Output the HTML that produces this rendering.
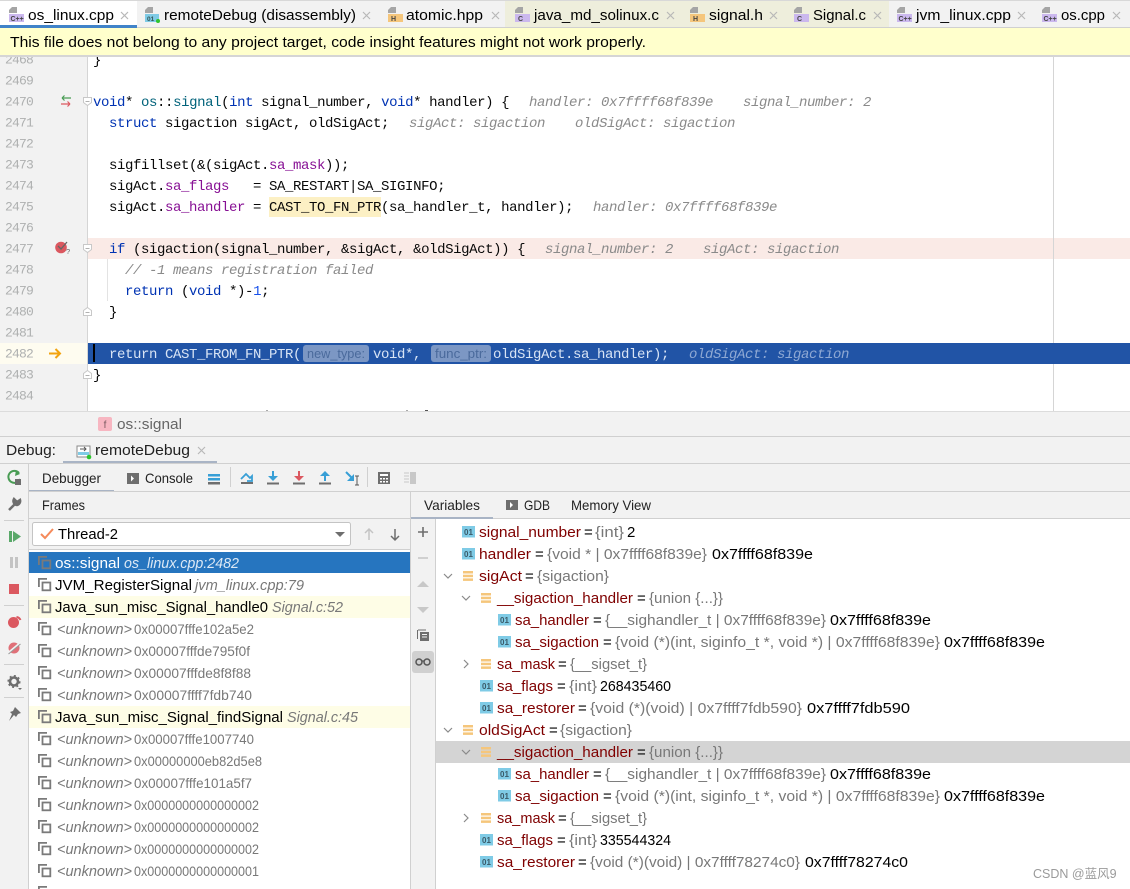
<!DOCTYPE html>
<html><head><meta charset="utf-8"><style>
html,body{margin:0;padding:0;background:#fff;width:1130px;height:889px;overflow:hidden}
svg{display:block}
text{white-space:pre}
.m{font-family:"Liberation Mono",monospace;font-size:14px;letter-spacing:-.4px;fill:#080808}
.n{font-family:"Liberation Mono",monospace;font-size:13px;letter-spacing:-.8px;fill:#aeb0b0}
.h{font-family:"Liberation Mono",monospace;font-size:14px;letter-spacing:-.4px;font-style:italic;fill:#8a8a8a}
.s{font-family:"Liberation Sans",sans-serif;font-size:15px;fill:#000}
.u{font-family:"Liberation Sans",sans-serif;font-size:13.6px;fill:#000}
.i{font-style:italic}
.g{fill:#787878}
.r{fill:#7f0000}
.k{fill:#0033b3}.f{fill:#00627a}.p{fill:#871094}.c{fill:#1750eb}
</style></head><body>
<svg width="1130" height="889" viewBox="0 0 1130 889" xmlns="http://www.w3.org/2000/svg">
<defs>
<g id="fr" fill="none" stroke="#7a7a7a" stroke-width="1.8"><path d="M.9 9V.9H9"/><rect x="4.500" y="4.500" width="7.800" height="7.800"/></g>
<g id="v"><rect width="13" height="11.500" fill="#7fcbe6"/><text x="6.500" y="8.800" text-anchor="middle" font-family="Liberation Sans" font-size="8" font-weight="bold" fill="#3a5a68">01</text></g>
<g id="st" fill="#f5c67c"><rect width="10" height="2.500"/><rect y="3.700" width="10" height="2.500"/><rect y="7.400" width="10" height="2.500"/></g>
<path id="dn" d="M1 1l4 4 4-4" fill="none" stroke="#8a8a8a" stroke-width="1.200"/>
<path id="rt" d="M1 1l4 4-4 4" fill="none" stroke="#8a8a8a" stroke-width="1.200"/>
<g id="filec"><path d="M3 0h5v6H0V3z" fill="#a5a5a5"/><rect x="0" y="7" width="15" height="8" fill="#cbb8ee"/><text x="1.500" y="14" font-family="Liberation Sans" font-size="7" font-weight="bold" fill="#444">C++</text></g>
<g id="filecc"><path d="M3 0h5v6H0V3z" fill="#a5a5a5"/><rect x="0" y="7" width="15" height="8" fill="#cbb8ee"/><text x="3" y="14" font-family="Liberation Sans" font-size="7" font-weight="bold" fill="#444">C</text></g>
<g id="fileh"><path d="M3 0h5v6H0V3z" fill="#a5a5a5"/><rect x="0" y="7" width="15" height="8" fill="#f5c67c"/><text x="3" y="14" font-family="Liberation Sans" font-size="7" font-weight="bold" fill="#444">H</text></g>
<path id="x" d="M0 0l7 7M7 0l-7 7" stroke="#b8b8b8" stroke-width="1.200" fill="none"/>
</defs>

<!-- editor -->
<rect x="0" y="56" width="1130" height="356" fill="#fff"/>
<rect x="0" y="56" width="87" height="356" fill="#f2f2f2"/>
<rect x="88" y="238" width="1042" height="21" fill="#faeae6"/>
<rect x="0" y="343" width="87" height="21" fill="#fefcf0"/>
<rect x="88" y="343" width="1042" height="21" fill="#2154a6"/>
<rect x="87" y="56" width="1" height="356" fill="#d5d5d5"/>
<rect x="1053" y="56" width="1" height="356" fill="#d5d5d5"/>
<rect x="1053" y="343" width="1" height="21" fill="#2154a6"/>
<rect x="107" y="259" width="1" height="42" fill="#e3e3e3"/>

<g transform="translate(0,.5)">
<text class="n" x="5" y="63">2468</text><text class="n" x="5" y="84">2469</text><text class="n" x="5" y="105">2470</text><text class="n" x="5" y="126">2471</text><text class="n" x="5" y="147">2472</text><text class="n" x="5" y="168">2473</text><text class="n" x="5" y="189">2474</text><text class="n" x="5" y="210">2475</text><text class="n" x="5" y="231">2476</text><text class="n" x="5" y="252">2477</text><text class="n" x="5" y="273">2478</text><text class="n" x="5" y="294">2479</text><text class="n" x="5" y="315">2480</text><text class="n" x="5" y="336">2481</text><text class="n" x="5" y="357">2482</text><text class="n" x="5" y="378">2483</text><text class="n" x="5" y="399">2484</text>
</g>

<rect x="269" y="197" width="112" height="20" fill="#fcf0c4"/>
<text class="m" x="93" y="64">}</text>
<text class="m" x="93" y="106"><tspan class="k">void</tspan>* <tspan class="f">os</tspan>::<tspan class="f">signal</tspan>(<tspan class="k">int</tspan> signal_number, <tspan class="k">void</tspan>* handler) {</text>
<text class="h" x="529" y="106">handler: 0x7ffff68f839e</text><text class="h" x="743" y="106">signal_number: 2</text>
<text class="m" x="109" y="127"><tspan class="k">struct</tspan> sigaction sigAct, oldSigAct;</text>
<text class="h" x="409" y="127">sigAct: sigaction</text><text class="h" x="575" y="127">oldSigAct: sigaction</text>
<text class="m" x="109" y="169">sigfillset(&amp;(sigAct.<tspan class="p">sa_mask</tspan>));</text>
<text class="m" x="109" y="190">sigAct.<tspan class="p">sa_flags</tspan>   = SA_RESTART|SA_SIGINFO;</text>
<text class="m" x="109" y="211">sigAct.<tspan class="p">sa_handler</tspan> = CAST_TO_FN_PTR(sa_handler_t, handler);</text>
<text class="h" x="593" y="211">handler: 0x7ffff68f839e</text>
<text class="m" x="109" y="253"><tspan class="k">if</tspan> (sigaction(signal_number, &amp;sigAct, &amp;oldSigAct)) {</text>
<text class="h" x="545" y="253">signal_number: 2</text><text class="h" x="703" y="253">sigAct: sigaction</text>
<text class="h" x="125" y="274">// -1 means registration failed</text>
<text class="m" x="125" y="295"><tspan class="k">return</tspan> (<tspan class="k">void</tspan> *)-<tspan class="c">1</tspan>;</text>
<text class="m" x="109" y="316">}</text>
<rect x="93" y="344" width="2" height="18" fill="#000"/>
<text class="m" style="fill:#d8e4f5" x="109" y="358">return CAST_FROM_FN_PTR(</text>
<rect x="303" y="345" width="66" height="17" rx="3" fill="#7c97c4"/>
<text class="u" style="fill:#4a6a9c;font-size:13px" x="307" y="358" textLength="58" lengthAdjust="spacingAndGlyphs">new_type:</text>
<text class="m" style="fill:#d8e4f5" x="373" y="358">void*,</text>
<rect x="431" y="345" width="60" height="17" rx="3" fill="#7c97c4"/>
<text class="u" style="fill:#4a6a9c;font-size:13px" x="435" y="358" textLength="52" lengthAdjust="spacingAndGlyphs">func_ptr:</text>
<text class="m" style="fill:#d8e4f5" x="493" y="358">oldSigAct.sa_handler);</text>
<text class="h" style="fill:#8fa9d4" x="689" y="358">oldSigAct: sigaction</text>
<text class="m" x="93" y="379">}</text>

<!-- gutter icons -->
<path d="M62 98h9M62 98l2.500-2.500M62 98l2.500 2.500" stroke="#499c54" stroke-width="1.200" fill="none"/>
<path d="M61 104h9M70 104l-2.500-2.500M70 104l-2.500 2.500" stroke="#db5860" stroke-width="1.200" fill="none"/>
<circle cx="61" cy="247.500" r="5.800" fill="#db5860"/>
<path d="M58 246l3 3 6-7" stroke="#666" stroke-width="1.300" fill="none"/>
<text x="66" y="254" font-family="Liberation Sans" font-size="7.500" fill="#666">?</text>
<path d="M49 353.500h11M55.500 349l4.500 4.500-4.500 4.500" stroke="#f2a30f" stroke-width="2" fill="none"/>
<g fill="#fff" stroke="#c8c8c8"><path d="M83.500 97.500h8v5l-4 3-4-3z"/><path d="M83.500 244.500h8v5l-4 3-4-3z"/><path d="M83.500 315.500h8v-5l-4-3-4 3z"/><path d="M83.500 378.500h8v-5l-4-3-4 3z"/></g>
<path d="M85.500 101.500h4M85.500 248.500h4M85.500 312.500h4M85.500 375.500h4" stroke="#b0b0b0" fill="none"/>
<rect x="266" y="410" width="2" height="1" fill="#aaa"/><rect x="406" y="410" width="2" height="1" fill="#aaa"/><rect x="425" y="410" width="3" height="1" fill="#555"/>

<!-- tabs -->
<rect x="0" y="0" width="1130" height="28" fill="#f2f2f2"/>
<rect x="0" y="0" width="1130" height="1" fill="#d8d8d8"/>
<rect x="505" y="1" width="384" height="26" fill="#eeeedc"/>
<rect x="0" y="1" width="137" height="26" fill="#fff"/>
<rect x="0" y="27" width="1130" height="1" fill="#d0d0d0"/>
<rect x="0" y="25" width="137" height="3" fill="#4083c9"/>
<use href="#filec" x="9" y="7"/>
<text class="s" x="28" y="20" textLength="86" lengthAdjust="spacingAndGlyphs">os_linux.cpp</text><use href="#x" x="121" y="12"/>
<path d="M148 7h5v6h-8v-3z" fill="#a5a5a5"/><rect x="145" y="14" width="14" height="8" fill="#7fcbe6"/><text x="147" y="21" font-family="Liberation Sans" font-size="6.500" font-weight="bold" fill="#355">01</text><circle cx="158" cy="21" r="2" fill="#2fc42f"/>
<text class="s" x="164" y="20" textLength="192" lengthAdjust="spacingAndGlyphs">remoteDebug (disassembly)</text><use href="#x" x="363" y="12"/>
<use href="#fileh" x="388" y="7"/>
<text class="s" x="406" y="20" textLength="77" lengthAdjust="spacingAndGlyphs">atomic.hpp</text><use href="#x" x="492" y="12"/>
<use href="#filecc" x="515" y="7"/>
<text class="s" x="534" y="20" textLength="125" lengthAdjust="spacingAndGlyphs">java_md_solinux.c</text><use href="#x" x="667" y="12"/>
<use href="#fileh" x="690" y="7"/>
<text class="s" x="709" y="20" textLength="54" lengthAdjust="spacingAndGlyphs">signal.h</text><use href="#x" x="770" y="12"/>
<use href="#filecc" x="794" y="7"/>
<text class="s" x="813" y="20" textLength="53" lengthAdjust="spacingAndGlyphs">Signal.c</text><use href="#x" x="874" y="12"/>
<use href="#filec" x="897" y="7"/>
<text class="s" x="916" y="20" textLength="95" lengthAdjust="spacingAndGlyphs">jvm_linux.cpp</text><use href="#x" x="1018" y="12"/>
<use href="#filec" x="1042" y="7"/>
<text class="s" x="1061" y="20" textLength="44" lengthAdjust="spacingAndGlyphs">os.cpp</text><use href="#x" x="1113" y="12"/>

<!-- banner -->
<rect x="0" y="28" width="1130" height="28" fill="#ffffcc"/>
<rect x="0" y="55" width="1130" height="2" fill="#d5d5d5"/>
<text class="s" x="10" y="47" textLength="636" lengthAdjust="spacingAndGlyphs">This file does not belong to any project target, code insight features might not work properly.</text>

<!-- breadcrumb + debug header -->
<rect x="0" y="411" width="1130" height="478" fill="#f2f2f2"/>
<rect x="0" y="411" width="1130" height="1" fill="#dcdcdc"/>
<rect x="98" y="417" width="14" height="14" rx="2" fill="#f7b6c1"/>
<text x="105" y="428" text-anchor="middle" font-family="Liberation Sans" font-size="10" fill="#7a5a60">f</text>
<text class="s" style="fill:#666" x="117" y="429" textLength="65" lengthAdjust="spacingAndGlyphs">os::signal</text>
<rect x="0" y="436" width="1130" height="1" fill="#d0d0d0"/>
<text class="s" style="fill:#222" x="6" y="455" textLength="50" lengthAdjust="spacingAndGlyphs">Debug:</text>
<rect x="77" y="446" width="13" height="11" fill="#fff" stroke="#8a8a8a"/><rect x="78" y="452" width="11" height="3" fill="#7fcbe6"/><path d="M80 449h6M84 447l2 2-2 2" stroke="#555" fill="none"/><circle cx="89" cy="457" r="2.300" fill="#2fc42f"/>
<text class="s" style="fill:#222" x="95" y="455" textLength="95" lengthAdjust="spacingAndGlyphs">remoteDebug</text><use href="#x" x="198" y="447"/>
<rect x="63" y="461" width="154" height="2.500" fill="#a9b4c5"/>
<rect x="0" y="463" width="1130" height="1" fill="#d0d0d0"/>

<!-- left toolbar -->
<rect x="28" y="464" width="1" height="425" fill="#d0d0d0"/>
<path d="M19 473a6 6 0 1 0 1 6" fill="none" stroke="#499c54" stroke-width="2"/><path d="M16 470l4 4-5 2z" fill="#499c54"/><rect x="15" y="479" width="6" height="6" fill="#6e6e6e"/>
<path d="M9 510l6-6M14 499a4 4 0 0 0 3 6 4 4 0 0 0 3-5l-3 2-2-2z" stroke="#6e6e6e" stroke-width="2.500" fill="#6e6e6e"/>
<rect x="4" y="520" width="20" height="1" fill="#d0d0d0"/>
<rect x="9" y="531" width="3" height="11" fill="#59a869"/><path d="M13 531l8 5.500-8 5.500z" fill="#59a869"/>
<rect x="10" y="557" width="3" height="11" fill="#c4c4c4"/><rect x="15" y="557" width="3" height="11" fill="#c4c4c4"/>
<rect x="9" y="584" width="10" height="10" fill="#db5860"/>
<rect x="4" y="605" width="20" height="1" fill="#d0d0d0"/>
<circle cx="13.500" cy="622.500" r="5.500" fill="#db5860"/><path d="M16.500 617a5 5 0 0 1 4 3" stroke="#db5860" stroke-width="2" fill="none"/>
<circle cx="14" cy="648" r="5.500" fill="#e07078"/><path d="M8 653l12-10" stroke="#f2f2f2" stroke-width="2"/><path d="M8.500 654l12-10" stroke="#999" stroke-width="1"/>
<rect x="4" y="664" width="20" height="1" fill="#d0d0d0"/>
<circle cx="14" cy="681.500" r="4" fill="none" stroke="#6e6e6e" stroke-width="2.600"/><circle cx="14" cy="681.500" r="5.800" fill="none" stroke="#6e6e6e" stroke-width="1.500" stroke-dasharray="2 2.500"/><path d="M18 688h4l-2 2z" fill="#6e6e6e"/>
<rect x="4" y="697" width="20" height="1" fill="#d0d0d0"/>
<path d="M15 707l6 6-3 1-2 3-2-2-5 6 3-7-2-2 3-1z" fill="#6e6e6e"/>

<!-- sub tabs -->
<text class="u" style="fill:#222" x="42" y="483" textLength="59" lengthAdjust="spacingAndGlyphs">Debugger</text>
<rect x="29" y="490" width="85" height="2" fill="#a9b4c5"/>
<rect x="127" y="473" width="12" height="11" fill="#6e6e6e"/><path d="M131 475.500l3 3-3 3z" fill="#fff"/>
<text class="u" style="fill:#222" x="145" y="483" textLength="48" lengthAdjust="spacingAndGlyphs">Console</text>
<rect x="208" y="474" width="12" height="2.500" fill="#389fd6"/><rect x="208" y="478" width="12" height="2.500" fill="#389fd6"/><rect x="208" y="482" width="12" height="2.500" fill="#6e6e6e"/>
<rect x="230" y="467" width="1" height="20" fill="#d0d0d0"/>
<path d="M241 479l5-5 4 4 2-2v5h-5" fill="none" stroke="#389fd6" stroke-width="1.800"/><rect x="241" y="482" width="12" height="2" fill="#6e6e6e"/>
<path d="M273 471v7" stroke="#389fd6" stroke-width="2"/><path d="M268 476h10l-5 5z" fill="#389fd6"/><rect x="267" y="482.500" width="12" height="2" fill="#6e6e6e"/>
<path d="M299 471v7" stroke="#db5860" stroke-width="2"/><path d="M294 476h10l-5 5z" fill="#db5860"/><rect x="293" y="482.500" width="12" height="2" fill="#6e6e6e"/>
<path d="M325 481v-7" stroke="#389fd6" stroke-width="2"/><path d="M320 476h10l-5-5z" fill="#389fd6"/><rect x="319" y="482.500" width="12" height="2" fill="#6e6e6e"/>
<path d="M346 472l6 6" stroke="#389fd6" stroke-width="2"/><path d="M354 474v7h-7z" fill="#389fd6"/><path d="M355 476h4M355 485h4M357 476v9" stroke="#555"/>
<rect x="367" y="467" width="1" height="20" fill="#d0d0d0"/>
<rect x="378" y="472" width="12" height="12" fill="#6e6e6e"/><rect x="380" y="474" width="8" height="2" fill="#fff"/><path d="M380 478h2v1.500h-2zM383 478h2v1.500h-2zM386 478h2v1.500h-2zM380 481h2v1.500h-2zM383 481h2v1.500h-2zM386 481h2v1.500h-2z" fill="#fff"/>
<path d="M404 473h5M404 476h5M404 479h5M404 482h5" stroke="#c8c8c8"/><rect x="410" y="472" width="6" height="12" fill="#c8c8c8"/>
<rect x="29" y="491" width="1101" height="1" fill="#d0d0d0"/>

<!-- frames panel -->
<text class="u" style="fill:#222" x="42" y="510" textLength="43" lengthAdjust="spacingAndGlyphs">Frames</text>
<rect x="29" y="518" width="381" height="1" fill="#d0d0d0"/>
<rect x="32.500" y="522.500" width="318" height="23" rx="2" fill="#fff" stroke="#c4c4c4"/>
<path d="M41 534l4 4 8-9" fill="none" stroke="#f58a5a" stroke-width="2"/>
<text class="s" x="58" y="539" textLength="60" lengthAdjust="spacingAndGlyphs">Thread-2</text>
<path d="M335 532h10l-5 5z" fill="#6e6e6e"/>
<path d="M369 540v-11M365 533l4-4 4 4" stroke="#c4c4c4" stroke-width="1.500" fill="none"/>
<path d="M395 529v11M391 536l4 4 4-4" stroke="#6e6e6e" stroke-width="1.500" fill="none"/>
<rect x="29" y="549" width="381" height="340" fill="#fff"/>
<rect x="29" y="549" width="381" height="1" fill="#d0d0d0"/>
<rect x="29" y="552" width="381" height="21" fill="#2675bf"/>
<rect x="29" y="596" width="381" height="22" fill="#fefde6"/>
<rect x="29" y="706" width="381" height="22" fill="#fefde6"/>
<rect x="410" y="492" width="1" height="397" fill="#d0d0d0"/>

<use href="#fr" x="38" y="556"/><use href="#fr" x="38" y="578"/><use href="#fr" x="38" y="600"/><use href="#fr" x="38" y="622"/><use href="#fr" x="38" y="644"/><use href="#fr" x="38" y="666"/><use href="#fr" x="38" y="688"/><use href="#fr" x="38" y="710"/><use href="#fr" x="38" y="732"/><use href="#fr" x="38" y="754"/><use href="#fr" x="38" y="776"/><use href="#fr" x="38" y="798"/><use href="#fr" x="38" y="820"/><use href="#fr" x="38" y="842"/><use href="#fr" x="38" y="864"/><use href="#fr" x="38" y="886"/>

<text class="s" style="fill:#fff" x="55" y="568" textLength="65" lengthAdjust="spacingAndGlyphs">os::signal</text><text class="s i" style="fill:#dbe8f5" x="124" y="568" textLength="115" lengthAdjust="spacingAndGlyphs">os_linux.cpp:2482</text>
<text class="s" x="55" y="590" textLength="137" lengthAdjust="spacingAndGlyphs">JVM_RegisterSignal</text><text class="s i g" x="195" y="590" textLength="109" lengthAdjust="spacingAndGlyphs">jvm_linux.cpp:79</text>
<text class="s" x="55" y="612" textLength="213" lengthAdjust="spacingAndGlyphs">Java_sun_misc_Signal_handle0</text><text class="s i g" x="272" y="612" textLength="71" lengthAdjust="spacingAndGlyphs">Signal.c:52</text>
<text class="s i g" x="57" y="634" textLength="75" lengthAdjust="spacingAndGlyphs">&lt;unknown&gt;</text><text class="u g" x="134" y="634" textLength="120" lengthAdjust="spacingAndGlyphs">0x00007fffe102a5e2</text>
<text class="s i g" x="57" y="656" textLength="75" lengthAdjust="spacingAndGlyphs">&lt;unknown&gt;</text><text class="u g" x="134" y="656" textLength="116" lengthAdjust="spacingAndGlyphs">0x00007fffde795f0f</text>
<text class="s i g" x="57" y="678" textLength="75" lengthAdjust="spacingAndGlyphs">&lt;unknown&gt;</text><text class="u g" x="134" y="678" textLength="117" lengthAdjust="spacingAndGlyphs">0x00007fffde8f8f88</text>
<text class="s i g" x="57" y="700" textLength="75" lengthAdjust="spacingAndGlyphs">&lt;unknown&gt;</text><text class="u g" x="134" y="700" textLength="118" lengthAdjust="spacingAndGlyphs">0x00007ffff7fdb740</text>
<text class="s" x="55" y="722" textLength="228" lengthAdjust="spacingAndGlyphs">Java_sun_misc_Signal_findSignal</text><text class="s i g" x="287" y="722" textLength="71" lengthAdjust="spacingAndGlyphs">Signal.c:45</text>
<text class="s i g" x="57" y="744" textLength="75" lengthAdjust="spacingAndGlyphs">&lt;unknown&gt;</text><text class="u g" x="134" y="744" textLength="120" lengthAdjust="spacingAndGlyphs">0x00007fffe1007740</text>
<text class="s i g" x="57" y="766" textLength="75" lengthAdjust="spacingAndGlyphs">&lt;unknown&gt;</text><text class="u g" x="134" y="766" textLength="128" lengthAdjust="spacingAndGlyphs">0x00000000eb82d5e8</text>
<text class="s i g" x="57" y="788" textLength="75" lengthAdjust="spacingAndGlyphs">&lt;unknown&gt;</text><text class="u g" x="134" y="788" textLength="118" lengthAdjust="spacingAndGlyphs">0x00007fffe101a5f7</text>
<text class="s i g" x="57" y="810" textLength="75" lengthAdjust="spacingAndGlyphs">&lt;unknown&gt;</text><text class="u g" x="134" y="810" textLength="125" lengthAdjust="spacingAndGlyphs">0x0000000000000002</text>
<text class="s i g" x="57" y="832" textLength="75" lengthAdjust="spacingAndGlyphs">&lt;unknown&gt;</text><text class="u g" x="134" y="832" textLength="125" lengthAdjust="spacingAndGlyphs">0x0000000000000002</text>
<text class="s i g" x="57" y="854" textLength="75" lengthAdjust="spacingAndGlyphs">&lt;unknown&gt;</text><text class="u g" x="134" y="854" textLength="125" lengthAdjust="spacingAndGlyphs">0x0000000000000002</text>
<text class="s i g" x="57" y="876" textLength="75" lengthAdjust="spacingAndGlyphs">&lt;unknown&gt;</text><text class="u g" x="134" y="876" textLength="125" lengthAdjust="spacingAndGlyphs">0x0000000000000001</text>

<!-- variables panel -->
<rect x="411" y="492" width="719" height="26" fill="#f2f2f2"/>
<text class="u" style="fill:#222" x="424" y="510" textLength="56" lengthAdjust="spacingAndGlyphs">Variables</text>
<rect x="506" y="500" width="12" height="10" fill="#6e6e6e"/><path d="M510 502l3 3-3 3z" fill="#fff"/>
<text class="u" style="fill:#222" x="524" y="510" textLength="26" lengthAdjust="spacingAndGlyphs">GDB</text>
<text class="u" style="fill:#222" x="571" y="510" textLength="80" lengthAdjust="spacingAndGlyphs">Memory View</text>
<rect x="411" y="518" width="719" height="1" fill="#d0d0d0"/>
<rect x="411" y="517" width="82" height="2" fill="#a9b4c5"/>
<rect x="436" y="519" width="694" height="370" fill="#fff"/>
<rect x="435" y="519" width="1" height="370" fill="#d0d0d0"/>
<path d="M418 532h10M423 527v10" stroke="#6e6e6e" stroke-width="1.600"/>
<path d="M418 558h10" stroke="#c8c8c8" stroke-width="1.600"/>
<path d="M417 587l6-6 6 6z" fill="#c8c8c8"/>
<path d="M417 607l6 6 6-6z" fill="#c8c8c8"/>
<path d="M418 630h8M417.500 630v9" stroke="#6e6e6e" fill="none"/><rect x="420" y="632" width="9" height="9" fill="#6e6e6e"/><path d="M422 634.500h5M422 637h5" stroke="#f2f2f2"/>
<rect x="412" y="651" width="22" height="22" rx="3" fill="#d0d0d0"/>
<circle cx="419" cy="662" r="3" fill="none" stroke="#555" stroke-width="1.500"/><circle cx="427" cy="662" r="3" fill="none" stroke="#555" stroke-width="1.500"/><path d="M422 661h2" stroke="#555" stroke-width="1.200"/>

<rect x="436" y="741" width="694" height="22" fill="#d4d4d4"/>

<use href="#v" x="462" y="526"/>
<text class="s r" x="479" y="537" textLength="102" lengthAdjust="spacingAndGlyphs">signal_number</text><text class="s" x="584" y="537">=</text><text class="s g" x="595" y="537" textLength="29" lengthAdjust="spacingAndGlyphs">{int}</text><text class="s" x="627" y="537">2</text>
<use href="#v" x="462" y="548"/>
<text class="s r" x="479" y="559" textLength="52" lengthAdjust="spacingAndGlyphs">handler</text><text class="s" x="535" y="559">=</text><text class="s g" x="547" y="559" textLength="160" lengthAdjust="spacingAndGlyphs">{void * | 0x7ffff68f839e}</text><text class="s" x="712" y="559" textLength="101" lengthAdjust="spacingAndGlyphs">0x7ffff68f839e</text>
<use href="#dn" x="443" y="573"/><use href="#st" x="463" y="571"/>
<text class="s r" x="479" y="581" textLength="43" lengthAdjust="spacingAndGlyphs">sigAct</text><text class="s" x="525" y="581">=</text><text class="s g" x="537" y="581" textLength="72" lengthAdjust="spacingAndGlyphs">{sigaction}</text>
<use href="#dn" x="461" y="595"/><use href="#st" x="481" y="593"/>
<text class="s r" x="497" y="603" textLength="136" lengthAdjust="spacingAndGlyphs">__sigaction_handler</text><text class="s" x="637" y="603">=</text><text class="s g" x="649" y="603" textLength="74" lengthAdjust="spacingAndGlyphs">{union {...}}</text>
<use href="#v" x="498" y="614"/>
<text class="s r" x="515" y="625" textLength="74" lengthAdjust="spacingAndGlyphs">sa_handler</text><text class="s" x="593" y="625">=</text><text class="s g" x="605" y="625" textLength="221" lengthAdjust="spacingAndGlyphs">{__sighandler_t | 0x7ffff68f839e}</text><text class="s" x="830" y="625" textLength="101" lengthAdjust="spacingAndGlyphs">0x7ffff68f839e</text>
<use href="#v" x="498" y="636"/>
<text class="s r" x="515" y="647" textLength="84" lengthAdjust="spacingAndGlyphs">sa_sigaction</text><text class="s" x="603" y="647">=</text><text class="s g" x="615" y="647" textLength="325" lengthAdjust="spacingAndGlyphs">{void (*)(int, siginfo_t *, void *) | 0x7ffff68f839e}</text><text class="s" x="944" y="647" textLength="101" lengthAdjust="spacingAndGlyphs">0x7ffff68f839e</text>
<use href="#rt" x="463" y="659"/><use href="#st" x="481" y="659"/>
<text class="s r" x="497" y="669" textLength="58" lengthAdjust="spacingAndGlyphs">sa_mask</text><text class="s" x="558" y="669">=</text><text class="s g" x="570" y="669" textLength="77" lengthAdjust="spacingAndGlyphs">{__sigset_t}</text>
<use href="#v" x="480" y="680"/>
<text class="s r" x="497" y="691" textLength="56" lengthAdjust="spacingAndGlyphs">sa_flags</text><text class="s" x="557" y="691">=</text><text class="s g" x="569" y="691" textLength="28" lengthAdjust="spacingAndGlyphs">{int}</text><text class="s" x="600" y="691" textLength="71" lengthAdjust="spacingAndGlyphs">268435460</text>
<use href="#v" x="480" y="702"/>
<text class="s r" x="497" y="713" textLength="78" lengthAdjust="spacingAndGlyphs">sa_restorer</text><text class="s" x="578" y="713">=</text><text class="s g" x="590" y="713" textLength="212" lengthAdjust="spacingAndGlyphs">{void (*)(void) | 0x7ffff7fdb590}</text><text class="s" x="807" y="713" textLength="103" lengthAdjust="spacingAndGlyphs">0x7ffff7fdb590</text>
<use href="#dn" x="443" y="727"/><use href="#st" x="463" y="725"/>
<text class="s r" x="479" y="735" textLength="66" lengthAdjust="spacingAndGlyphs">oldSigAct</text><text class="s" x="549" y="735">=</text><text class="s g" x="560" y="735" textLength="72" lengthAdjust="spacingAndGlyphs">{sigaction}</text>
<use href="#dn" x="461" y="749"/><use href="#st" x="481" y="747"/>
<text class="s r" x="497" y="757" textLength="136" lengthAdjust="spacingAndGlyphs">__sigaction_handler</text><text class="s" x="637" y="757">=</text><text class="s g" x="649" y="757" textLength="74" lengthAdjust="spacingAndGlyphs">{union {...}}</text>
<use href="#v" x="498" y="768"/>
<text class="s r" x="515" y="779" textLength="74" lengthAdjust="spacingAndGlyphs">sa_handler</text><text class="s" x="593" y="779">=</text><text class="s g" x="605" y="779" textLength="221" lengthAdjust="spacingAndGlyphs">{__sighandler_t | 0x7ffff68f839e}</text><text class="s" x="830" y="779" textLength="101" lengthAdjust="spacingAndGlyphs">0x7ffff68f839e</text>
<use href="#v" x="498" y="790"/>
<text class="s r" x="515" y="801" textLength="84" lengthAdjust="spacingAndGlyphs">sa_sigaction</text><text class="s" x="603" y="801">=</text><text class="s g" x="615" y="801" textLength="325" lengthAdjust="spacingAndGlyphs">{void (*)(int, siginfo_t *, void *) | 0x7ffff68f839e}</text><text class="s" x="944" y="801" textLength="101" lengthAdjust="spacingAndGlyphs">0x7ffff68f839e</text>
<use href="#rt" x="463" y="813"/><use href="#st" x="481" y="813"/>
<text class="s r" x="497" y="823" textLength="58" lengthAdjust="spacingAndGlyphs">sa_mask</text><text class="s" x="558" y="823">=</text><text class="s g" x="570" y="823" textLength="77" lengthAdjust="spacingAndGlyphs">{__sigset_t}</text>
<use href="#v" x="480" y="834"/>
<text class="s r" x="497" y="845" textLength="56" lengthAdjust="spacingAndGlyphs">sa_flags</text><text class="s" x="557" y="845">=</text><text class="s g" x="569" y="845" textLength="28" lengthAdjust="spacingAndGlyphs">{int}</text><text class="s" x="600" y="845" textLength="71" lengthAdjust="spacingAndGlyphs">335544324</text>
<use href="#v" x="480" y="856"/>
<text class="s r" x="497" y="867" textLength="78" lengthAdjust="spacingAndGlyphs">sa_restorer</text><text class="s" x="578" y="867">=</text><text class="s g" x="590" y="867" textLength="210" lengthAdjust="spacingAndGlyphs">{void (*)(void) | 0x7ffff78274c0}</text><text class="s" x="805" y="867" textLength="103" lengthAdjust="spacingAndGlyphs">0x7ffff78274c0</text>

<text x="1033" y="878" font-family="Liberation Sans, Noto Sans CJK SC, sans-serif" font-size="12.500" fill="#9a9a9a">CSDN @蓝风9</text>
</svg>
</body></html>
